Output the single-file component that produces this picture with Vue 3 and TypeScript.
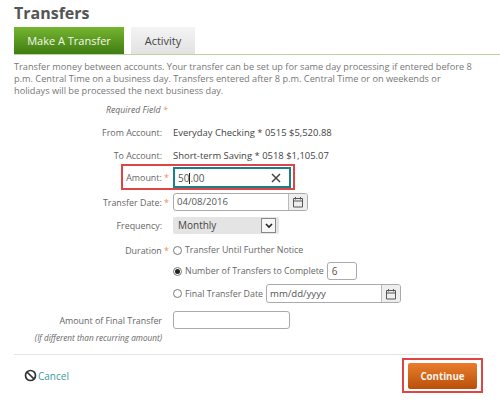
<template>
  <div class="page">
    <h1 class="title">Transfers</h1>

    <div class="tabs">
      <button class="tab active">Make A Transfer</button>
      <button class="tab">Activity</button>
    </div>

    <p class="intro">
      Transfer money between accounts. Your transfer can be set up for same day processing if entered before 8
      p.m. Central Time on a business day. Transfers entered after 8 p.m. Central Time or on weekends or
      holidays will be processed the next business day.
    </p>

    <div class="required">Required Field <span class="star">*</span></div>

    <div class="row from-row">
      <div class="label">From Account:</div>
      <div class="value">{{ fromAccount }}</div>
    </div>

    <div class="row to-row">
      <div class="label">To Account:</div>
      <div class="value">{{ toAccount }}</div>
    </div>

    <div class="row amount-row">
      <div class="label">Amount: <span class="star">*</span></div>
      <div class="amount-input">
        <span class="amount-text">50<i class="caret"></i>.00</span>
        <svg class="clear" width="10" height="10" viewBox="0 0 10 10">
          <path d="M1 1l8 8M9 1l-8 8" stroke="#444" stroke-width="1.5" fill="none" />
        </svg>
      </div>
      <div class="highlight"></div>
    </div>

    <div class="row date-row">
      <div class="label">Transfer Date: <span class="star">*</span></div>
      <div class="date-input">
        <span class="date-text">04/08/2016</span>
        <span class="cal-btn">
          <svg width="12" height="12" viewBox="0 0 12 12">
            <path d="M1.5 2.5h9v8.500h-9zM1.500 5h9M3.500 1v2.500M8.500 1v2.500" stroke="#555" stroke-width="1" fill="none" />
          </svg>
        </span>
      </div>
    </div>

    <div class="row freq-row">
      <div class="label">Frequency:</div>
      <div class="select">
        <span class="select-text">Monthly</span>
        <span class="select-arrow">
          <svg width="8" height="6" viewBox="0 0 8 6">
            <path d="M1 1l3 3 3-3" stroke="#222" stroke-width="1.6" fill="none" />
          </svg>
        </span>
      </div>
    </div>

    <div class="row duration-row">
      <div class="label">Duration <span class="star">*</span></div>
      <div class="option">
        <span class="radio"></span>
        <span>Transfer Until Further Notice</span>
      </div>
    </div>

    <div class="row count-row">
      <div class="label"></div>
      <div class="option">
        <span class="radio checked"></span>
        <span>Number of Transfers to Complete</span>
        <div class="count-input">6</div>
      </div>
    </div>

    <div class="row final-row">
      <div class="label"></div>
      <div class="option">
        <span class="radio"></span>
        <span>Final Transfer Date</span>
        <div class="date-input final-date">
          <span class="date-text">mm/dd/yyyy</span>
          <span class="cal-btn">
            <svg width="12" height="12" viewBox="0 0 12 12">
              <path d="M1.5 2.5h9v8.500h-9zM1.500 5h9M3.500 1v2.500M8.500 1v2.500" stroke="#555" stroke-width="1" fill="none" />
            </svg>
          </span>
        </div>
      </div>
    </div>

    <div class="row last-row">
      <div class="label">Amount of Final Transfer</div>
      <div class="plain-input"></div>
    </div>
    <div class="hint">(If different than recurring amount)</div>

    <hr class="divider" />

    <div class="footer">
      <a class="cancel">
        <svg width="13" height="13" viewBox="0 0 13 13">
          <circle cx="6.5" cy="6.5" r="5" stroke="#333" stroke-width="1.7" fill="none" />
          <path d="M3 3l7 7" stroke="#333" stroke-width="1.7" />
        </svg>
        <span>Cancel</span>
      </a>
      <div class="continue-wrap">
        <button class="continue">Continue</button>
      </div>
    </div>
  </div>
</template>

<script setup lang="ts">
const fromAccount = "Everyday Checking * 0515 $5,520.88";
const toAccount = "Short-term Saving * 0518 $1,105.07";
</script>

<style>
html,
body {
  margin: 0;
  background: #fff;
}
</style>

<style scoped>
.page {
  width: 500px;
  height: 400px;
  box-sizing: border-box;
  padding: 4px 0 0 14px;
  overflow: hidden;
  font-family: "Open Sans", sans-serif;
  font-size: 10px;
  color: #666;
}

.title {
  margin: 0;
  height: 23px;
  font-size: 16px;
  line-height: 18px;
  font-weight: 700;
  color: #555;
}

.tabs {
  display: flex;
  gap: 7px;
  box-sizing: border-box;
  height: 28px;
  border-bottom: 1px solid #b9d5a0;
}

.tab {
  width: 64px;
  height: 27px;
  padding: 0;
  border: 0;
  background: linear-gradient(#f4f4f4, #e2e2e2);
  font-family: inherit;
  font-size: 11px;
  color: #444;
}

.tab.active {
  width: 110px;
  background: linear-gradient(#76b52f, #3f7d12);
  color: #f2f7ea;
}

.intro {
  margin: 6px 0 0;
  width: 462px;
  font-size: 9.2px;
  line-height: 12px;
  color: #777;
}

.required {
  margin: 6px 0 0 92px;
  height: 14px;
  line-height: 14px;
  font-size: 8.7px;
  font-style: italic;
  color: #666;
}

.star {
  color: #ef8a4a;
}

.row {
  position: relative;
  display: flex;
  align-items: center;
  gap: 11px;
}

.label {
  width: 148px;
  flex: none;
  text-align: right;
  font-size: 8.9px;
  color: #666;
}

.label .star {
  margin-right: -7px;
}

.value {
  font-size: 9.45px;
  color: #444;
}

.from-row {
  margin-top: 7px;
  height: 16px;
}

.to-row {
  margin-top: 7px;
  height: 16px;
}

.amount-row {
  margin-top: 4px;
  height: 21px;
}

.amount-input {
  display: flex;
  align-items: center;
  justify-content: space-between;
  box-sizing: border-box;
  width: 118px;
  height: 21px;
  padding: 0 8px 0 3px;
  border: 2px solid #1a7f86;
  font-size: 10px;
  color: #555;
}

.caret {
  display: inline-block;
  width: 1px;
  height: 11px;
  vertical-align: -2px;
  background: #222;
}

.highlight {
  position: absolute;
  left: 107px;
  top: -3px;
  width: 174px;
  height: 26px;
  box-sizing: border-box;
  border: 2px solid #e04545;
  pointer-events: none;
}

.date-row {
  margin-top: 5px;
  height: 18px;
}

.date-input {
  display: flex;
  box-sizing: border-box;
  width: 135px;
  height: 18px;
  border: 1px solid #aaa;
  border-radius: 3px;
  background: #fff;
}

.date-text {
  flex: 1;
  padding-left: 3px;
  line-height: 16px;
  font-size: 9.6px;
  color: #555;
}

.cal-btn {
  display: flex;
  align-items: center;
  justify-content: center;
  width: 18px;
  border-left: 1px solid #bbb;
  border-radius: 0 2px 2px 0;
  background: #eee;
}

.freq-row {
  margin-top: 6px;
  height: 17px;
}

.select {
  display: flex;
  justify-content: space-between;
  box-sizing: border-box;
  width: 106px;
  height: 17px;
  border-radius: 2px;
  background: #e4e4e4;
}

.select-text {
  padding-left: 5px;
  line-height: 17px;
  font-size: 10px;
  color: #444;
}

.select-arrow {
  display: flex;
  align-items: center;
  justify-content: center;
  box-sizing: border-box;
  width: 15px;
  margin: 1px 3px 1px 0;
  border: 1px solid #888;
  background: #f6f6f6;
}

.duration-row {
  margin-top: 7px;
  height: 18px;
}

.count-row {
  margin-top: 3px;
  height: 18px;
}

.final-row {
  margin-top: 4px;
  height: 19px;
}

.option {
  display: flex;
  align-items: center;
  gap: 3px;
  font-size: 8.85px;
  color: #666;
}

.radio {
  position: relative;
  box-sizing: border-box;
  width: 9px;
  height: 9px;
  border: 1px solid #777;
  border-radius: 50%;
  background: #fff;
}

.radio.checked::after {
  content: "";
  position: absolute;
  inset: 1px;
  border-radius: 50%;
  background: #222;
}

.count-input {
  box-sizing: border-box;
  width: 30px;
  height: 18px;
  padding-left: 4px;
  border: 1px solid #aaa;
  border-radius: 3px;
  line-height: 16px;
  font-size: 10px;
  color: #555;
}

.final-date {
  height: 19px;
}

.final-date .date-text {
  line-height: 17px;
}

.last-row {
  margin-top: 8px;
  height: 18px;
}

.plain-input {
  box-sizing: border-box;
  width: 117px;
  height: 18px;
  border: 1px solid #aaa;
  border-radius: 3px;
}

.hint {
  width: 148px;
  margin-top: 3px;
  text-align: right;
  font-size: 8.2px;
  line-height: 12px;
  font-style: italic;
  white-space: nowrap;
  color: #666;
}

.divider {
  width: 466px;
  margin: 10px 0 0;
  border: 0;
  border-top: 1px solid #e4e4e4;
}

.footer {
  display: flex;
  align-items: center;
  justify-content: space-between;
  width: 469px;
  margin-top: 3px;
}

.cancel {
  display: flex;
  align-items: center;
  gap: 1px;
  margin-left: 10px;
  font-size: 10px;
  color: #3d9aa0;
}

.continue-wrap {
  display: flex;
  justify-content: center;
  align-items: center;
  box-sizing: border-box;
  width: 81px;
  height: 35px;
  border: 2px solid #e04545;
}

.continue {
  width: 69px;
  height: 26px;
  margin-top: 1px;
  padding: 0;
  border: 0;
  border-radius: 2px;
  background: linear-gradient(#ea7d2c, #b9500b);
  font-family: inherit;
  font-size: 9.7px;
  font-weight: 700;
  color: #fdf3e8;
}
</style>
